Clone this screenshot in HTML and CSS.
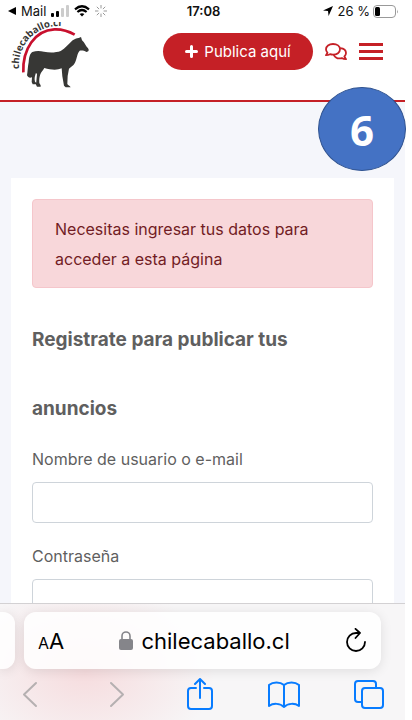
FILE: index.html
```html
<!DOCTYPE html>
<html lang="es">
<head>
    <meta charset="UTF-8">
    <meta name="viewport" content="width=device-width, initial-scale=1.0">
    <title>chilecaballo.cl</title>
    <link rel="stylesheet" href="styles.css">
</head>
<body>
    <div class="screen">
        <div class="status-bar">
            <div class="status-left">
                <svg width="8" height="8" viewBox="0 0 8 8"><path d="M0 4 8 0v8z"/></svg>
                <span>Mail</span>
                <svg width="18" height="12" viewBox="0 0 18 12">
                    <rect x="0" y="8" width="3" height="4" rx="1"/>
                    <rect x="5" y="6" width="3" height="6" rx="1"/>
                    <rect x="10" y="3" width="3" height="9" rx="1" fill="#ccc"/>
                    <rect x="15" y="0" width="3" height="12" rx="1" fill="#ccc"/>
                </svg>
                <svg width="16" height="12" viewBox="0 0 16 12" fill="none" stroke="#000" stroke-width="2.2">
                    <path d="M1 4.3Q8-1.8 15 4.3M3.4 7Q8 3 12.6 7"/>
                    <path d="M8 11.5 5.6 9.1Q8 7.2 10.4 9.1z" fill="#000" stroke="none"/>
                </svg>
                <svg width="12" height="12" viewBox="0 0 12 12" fill="none" stroke="#999">
                    <path d="M6 0v3.4M6 8.6V12M0 6h3.4M8.6 6H12M1.8 1.8l2.3 2.3M7.9 7.9l2.3 2.3M1.8 10.2l2.3-2.3M7.9 4.1l2.3-2.3"/>
                </svg>
            </div>
            <strong class="status-time">17:08</strong>
            <div class="status-right">
                <svg width="10" height="10" viewBox="0 0 10 10"><path d="M10 0 5.6 10 5 5 0 4.4z"/></svg>
                <span>26 %</span>
                <svg width="26" height="13" viewBox="0 0 26 13">
                    <rect x=".5" y=".5" width="22" height="12" rx="3.5" fill="#fff" stroke="#999"/>
                    <rect x="2" y="2" width="5" height="9" rx="1.5"/>
                    <path d="M24 4.5q1.5 2 0 4z" fill="#999"/>
                </svg>
            </div>
        </div>

        <header class="site-header">
            <a class="logo" href="#" aria-label="chilecaballo.cl">
                <svg width="92" height="68" viewBox="0 66 276 204">
                    <defs><path id="logo-curve" d="M57 207A119 119 0 0 1 230 91"/></defs>
                    <text class="logo-text"><textPath href="#logo-curve">chilecaballo.cl</textPath></text>
                    <path d="M70 217C67 147 105 91 163 88C187 87 207 94 224 104" fill="none" stroke="#c8102e" stroke-width="8"/>
                    <path fill="#373735" d="M243 111l3 10c8 6 10 16 18 24 4 5 2 11-5 11-6-4-13-5-20-4-8 9-8 24-15 38-4 8-12 11-17 16l-4 22-1 24c1 4 8 5 10 10h-15l-5-5-5-28-2-24c-13 6-32 5-52-1-4 8-10 12-12 19-3 9-4 17-3 26 2 5 5 6 4 11h-11l-3-6 3-31-3-5c-3 9-6 16-3 27l5 5v3H98l-3-7 1-14c-8 3-12-1-15-6 2-10 2-26 5-39 1-13 3-26 11-31 12-4 23-3 35-1 17 4 36 3 50-2 14-7 23-21 36-32 6-4 11-6 18-7z"/>
                </svg>
            </a>
            <a class="publish-btn" href="#">
                <svg width="13" height="13" viewBox="0 0 13 13" stroke="#fff" stroke-width="3" stroke-linecap="round"><path d="M6.5 1.5v10M1.5 6.5h10"/></svg>
                Publica aquí
            </a>
            <button class="icon-btn" type="button" aria-label="Mensajes">
                <svg width="22" height="18" viewBox="0 0 22 18" fill="none" stroke="#c52026" stroke-width="1.8" stroke-linejoin="round">
                    <path d="M8 1C4 1 1 3.2 1 6.3c0 1.4.6 2.6 1.5 3.5L1 12.2c1.7 0 3-.4 4-1 .9.3 1.9.5 3 .5 4 0 7-2.3 7-5.4S12 1 8 1z"/>
                    <path d="M15.2 5.2c3.4.3 5.8 2.3 5.8 4.9 0 1.4-.6 2.5-1.6 3.4L21 16.2c-1.8 0-3.2-.4-4.2-1.1-3.5.9-6.7-.6-8.1-3.3"/>
                </svg>
            </button>
            <button class="icon-btn" type="button" aria-label="Menú">
                <svg width="24" height="17" viewBox="0 0 24 17" fill="#c52026"><path d="M0 0h24v3H0zM0 7h24v3H0zM0 14h24v3H0z"/></svg>
            </button>
        </header>
        <span class="step-badge">6</span>

        <main class="content">
            <section class="card">
                <div class="alert" role="alert">Necesitas ingresar tus datos para acceder a esta página</div>
                <h1>Registrate para publicar tus anuncios</h1>
                <form class="login-form">
                    <label for="user">Nombre de usuario o e-mail</label>
                    <input type="text" id="user" name="user">
                    <label for="password">Contraseña</label>
                    <input type="password" id="password" name="password">
                </form>
            </section>
        </main>

        <footer class="browser-bar">
            <div class="tabs">
                <div class="tab-prev"></div>
                <div class="address">
                    <button class="text-size" type="button" aria-label="Tamaño del texto"><small>A</small>A</button>
                    <div class="domain">
                        <svg width="14" height="19" viewBox="0 0 14 19">
                            <rect x="0" y="8" width="14" height="11" rx="2" fill="#85858a"/>
                            <path d="M3 9V5a4 4 0 0 1 8 0v4" fill="none" stroke="#85858a" stroke-width="1.6"/>
                        </svg>
                        <span>chilecaballo.cl</span>
                    </div>
                    <button type="button" aria-label="Recargar">
                        <svg width="22" height="25" viewBox="0 0 22 25" fill="none" stroke="#000" stroke-width="1.8" stroke-linecap="round" stroke-linejoin="round">
                            <path d="M14.5 5H11a9 9 0 1 0 9 9M10.5.9 15 5l-4.5 5"/>
                        </svg>
                    </button>
                </div>
            </div>
            <nav class="toolbar">
                <button type="button" aria-label="Atrás">
                    <svg width="32" height="32" viewBox="0 0 32 32" stroke="#b5b0b1"><path d="M22 5 10 16.5 22 28"/></svg>
                </button>
                <button type="button" aria-label="Adelante">
                    <svg width="32" height="32" viewBox="0 0 32 32" stroke="#b5b0b1"><path d="M12 5l12 11.5L12 28"/></svg>
                </button>
                <button type="button" aria-label="Compartir">
                    <svg width="32" height="32" viewBox="0 0 32 32" stroke="#087cff"><path d="M12 10H7q-3 0-3 3v15q0 3 3 3h18q3 0 3-3V13q0-3-3-3h-5M16 20V1M11 6l5-5 5 5"/></svg>
                </button>
                <button type="button" aria-label="Marcadores">
                    <svg width="32" height="32" viewBox="0 0 32 32" stroke="#087cff"><path d="M16 7C12 3.500 5 3.500 1 7v21c4-3 11-3 15 1 4-4 11-4 15-1V7C27 3.500 20 3.500 16 7zM16 7v22"/></svg>
                </button>
                <button type="button" aria-label="Pestañas">
                    <svg width="32" height="32" viewBox="0 0 32 32" stroke="#087cff"><rect x="9" y="10" width="21" height="20" rx="3"/><path d="M9 24H5q-3 0-3-3V6q0-3 3-3h15q3 0 3 3v4"/></svg>
                </button>
            </nav>
        </footer>
    </div>
</body>
</html>
```

FILE: styles.css
```css
* {
    box-sizing: border-box;
}
body {
    margin: 0;
    padding-right: 7px;
    background-color: #fff;
    font-family: Inter, "Liberation Sans", sans-serif;
    color: #5f5f5f;
}
svg {
    display: block;
    flex: none;
}
button {
    padding: 0;
    border: none;
    background: none;
    color: #000;
    font-family: inherit;
    cursor: pointer;
}
.screen {
    position: relative;
    display: flex;
    flex-direction: column;
    height: 100vh;
    background-color: #f5f6fb;
}

/* Phone status bar */
.status-bar {
    display: grid;
    grid-template-columns: 1fr auto 1fr;
    align-items: center;
    height: 22px;
    padding: 0 6px 0 8px;
    background-color: #fff;
    color: #111;
    font-size: 13px;
}
.status-left, .status-right {
    display: flex;
    align-items: center;
    gap: 5px;
}
.status-right {
    justify-content: flex-end;
    gap: 3px;
}
.status-right span {
    margin-left: 2px;
}
.status-time {
    font-weight: 600;
}

/* Header */
.site-header {
    display: flex;
    align-items: flex-start;
    height: 80px;
    padding-right: 22px;
    background-color: #fff;
    border-bottom: 2px solid #c52026;
}
.logo {
    margin-right: auto;
}
.logo-text {
    font-family: "Open Sans", sans-serif;
    font-size: 29px;
    font-weight: 700;
    fill: #373735;
}
.publish-btn {
    display: flex;
    align-items: center;
    justify-content: center;
    gap: 6px;
    width: 150px;
    height: 37px;
    margin-top: 11px;
    border-radius: 19px;
    background-color: #c52026;
    color: #fff;
    font-size: 15px;
    text-decoration: none;
}
.icon-btn {
    display: flex;
    align-items: center;
    height: 37px;
    margin: 11px 0 0 12px;
}
.step-badge {
    position: absolute;
    top: 87px;
    right: -1px;
    display: flex;
    align-items: center;
    justify-content: center;
    width: 88px;
    height: 84px;
    border: 1px solid #2f528f;
    border-radius: 50%;
    background-color: #4472c4;
    color: #fff;
    font-family: "Open Sans", sans-serif;
    font-size: 42px;
    font-weight: 700;
}

/* Page content */
.content {
    flex: 1;
    min-height: 0;
    padding: 76px 11px 0;
    overflow: hidden;
}
.card {
    padding: 21px;
    background-color: #fff;
}
.alert {
    padding: 14px 22px 13px;
    border: 1px solid #f5c6cb;
    border-radius: 4px;
    background-color: #f8d7da;
    color: #721c24;
    font-size: 16px;
    line-height: 30px;
}
h1 {
    margin: 17px 0 1px;
    font-size: 19px;
    font-weight: 700;
    line-height: 69px;
}
.login-form {
    display: flex;
    flex-direction: column;
}
.login-form label {
    font-size: 16px;
    line-height: 30px;
}
.login-form input {
    width: 100%;
    height: 41px;
    margin: 8px 0 18px;
    padding: 6px 12px;
    border: 1px solid #ced4da;
    border-radius: 4px;
    background-color: #fff;
    font-family: inherit;
    font-size: 16px;
}

/* Browser controls */
.browser-bar {
    border-top: 1px solid #d3d1d3;
    background: radial-gradient(ellipse 130px 90px at 85px 68px, #f6dcde, rgba(246, 228, 230, 0)), #f7f6f7;
}
.tabs {
    display: flex;
    gap: 9px;
    height: 66px;
    padding-top: 8px;
    padding-right: 24px;
}
.tab-prev, .address {
    height: 57px;
    background-color: rgba(255, 255, 255, 0.85);
    box-shadow: 0 2px 12px rgba(0, 0, 0, 0.1);
}
.tab-prev {
    width: 15px;
    border-radius: 0 12px 12px 0;
}
.address {
    display: flex;
    flex: 1;
    align-items: center;
    justify-content: space-between;
    padding: 0 14px;
    border-radius: 12px;
}
.text-size {
    font-size: 22px;
}
.text-size small {
    font-size: 16px;
}
.domain {
    display: flex;
    align-items: center;
    gap: 8px;
    color: #000;
    font-size: 22px;
}
.toolbar {
    display: flex;
    justify-content: space-between;
    padding: 8px 20px 10px 14px;
}
.toolbar svg {
    fill: none;
    stroke-width: 2;
    stroke-linecap: round;
    stroke-linejoin: round;
}
```
